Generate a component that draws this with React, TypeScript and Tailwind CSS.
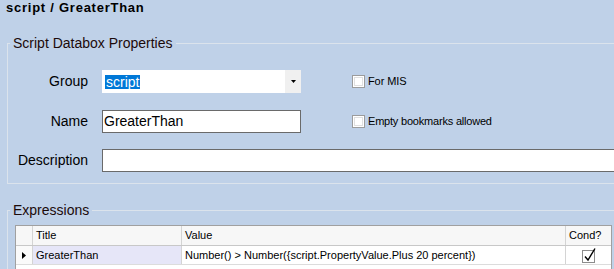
import React from "react";

const Check = () => (
  <span className="flex items-center gap-[3px]">
    <span className="w-[13px] h-[13px] border border-[#9c9c9c] bg-white flex items-center justify-center">
      <span className="w-[9px] h-[9px] border border-[#e0e0e0]" />
    </span>
  </span>
);

const FieldRow = ({ label, children }: { label: string; children: React.ReactNode }) => (
  <div className="flex items-center h-[23px]">
    <div className="w-[80px] text-right text-[14px] text-black">{label}</div>
    <div className="ml-[14px] flex items-center">{children}</div>
  </div>
);

export default function App() {
  return (
    <div
      className="w-[614px] h-[269px] overflow-hidden bg-[#bfd1e8] text-black"
      style={{ fontFamily: '"Liberation Sans", Arial, sans-serif' }}
    >
      <div className="h-[35px] pl-[6px] text-[13px] leading-[15px] font-bold tracking-[0.75px]">
        script / GreaterThan
      </div>

      <fieldset className="ml-[7px] w-[700px] border border-[#dbe3ec] pb-[11px]">
        <legend className="ml-[2px] px-[3px] text-[14px] leading-[16px] text-[#1c0a0a]">
          Script Databox Properties
        </legend>
        <div className="pt-[19px] flex flex-col">
          <FieldRow label="Group">
            <div className="w-[199px] h-[23px] bg-white flex items-center justify-between">
              <span className="ml-[3px] px-[1px] bg-[#0078d7] text-white text-[14px] leading-[14px] h-[14px]">
                script
              </span>
              <span className="w-[16px] h-[23px] bg-[#f0f0f0] flex items-center justify-center">
                <svg width="5" height="3" viewBox="0 0 5 3">
                  <path d="M0 0h5L2.5 3z" fill="#000" />
                </svg>
              </span>
            </div>
            <div className="ml-[51px] flex items-center gap-[3px]">
              <Check />
              <span className="text-[11px] tracking-[-0.1px]">For MIS</span>
            </div>
          </FieldRow>
          <div className="h-[17px]" />
          <FieldRow label="Name">
            <div className="w-[199px] h-[23px] bg-white border border-[#6a6a6a] flex items-center">
              <span className="ml-[1px] text-[14px]">GreaterThan</span>
            </div>
            <div className="ml-[51px] flex items-center gap-[3px]">
              <Check />
              <span className="text-[11px] tracking-[-0.2px]">Empty bookmarks allowed</span>
            </div>
          </FieldRow>
          <div className="h-[16px]" />
          <FieldRow label="Description">
            <div className="w-[560px] h-[23px] bg-white border border-[#6a6a6a]" />
          </FieldRow>
        </div>
      </fieldset>

      <fieldset className="ml-[7px] mt-[18px] w-[700px] border border-[#dbe3ec] pb-[20px]">
        <legend className="ml-[2px] px-[3px] text-[14px] leading-[16px] text-[#1c0a0a]">
          Expressions
        </legend>
        <div className="ml-[7px] mt-[7px] w-[597px] border border-[#a0a0a0] bg-white text-[11px]">
          <div className="flex h-[20px] bg-[#f7f7f7] border-b border-[#c8c8c8]">
            <div className="w-[17px] border-r border-[#d4d4d4]" />
            <div className="w-[149px] border-r border-[#d4d4d4] pl-[3px] flex items-center">Title</div>
            <div className="w-[384px] border-r border-[#d4d4d4] pl-[3px] flex items-center">Value</div>
            <div className="flex-1 pl-[3px] flex items-center">Cond?</div>
          </div>
          <div className="flex h-[19px] border-b border-[#dcdcdc]">
            <div className="w-[17px] border-r border-[#d4d4d4] flex items-center justify-center bg-[#fafafa]">
              <svg width="4" height="7" viewBox="0 0 4 7">
                <path d="M0 0l4 3.5L0 7z" fill="#000" />
              </svg>
            </div>
            <div className="w-[149px] border-r border-[#d4d4d4] pl-[3px] flex items-center bg-[#e6e6f8]">
              GreaterThan
            </div>
            <div className="w-[384px] border-r border-[#d4d4d4] pl-[3px] flex items-center">
              {"Number() > Number({script.PropertyValue.Plus 20 percent})"}
            </div>
            <div className="flex-1 flex items-center justify-center">
              <svg width="16" height="16" viewBox="0 0 16 16">
                <rect x="1.5" y="3.5" width="12" height="12" fill="#fff" stroke="#8c8c8c" />
                <path d="M4 9.5l3 3.5L14 1.5" fill="none" stroke="#000" strokeWidth="1.4" />
              </svg>
            </div>
          </div>
          <div className="h-[10px]" />
        </div>
      </fieldset>
    </div>
  );
}
